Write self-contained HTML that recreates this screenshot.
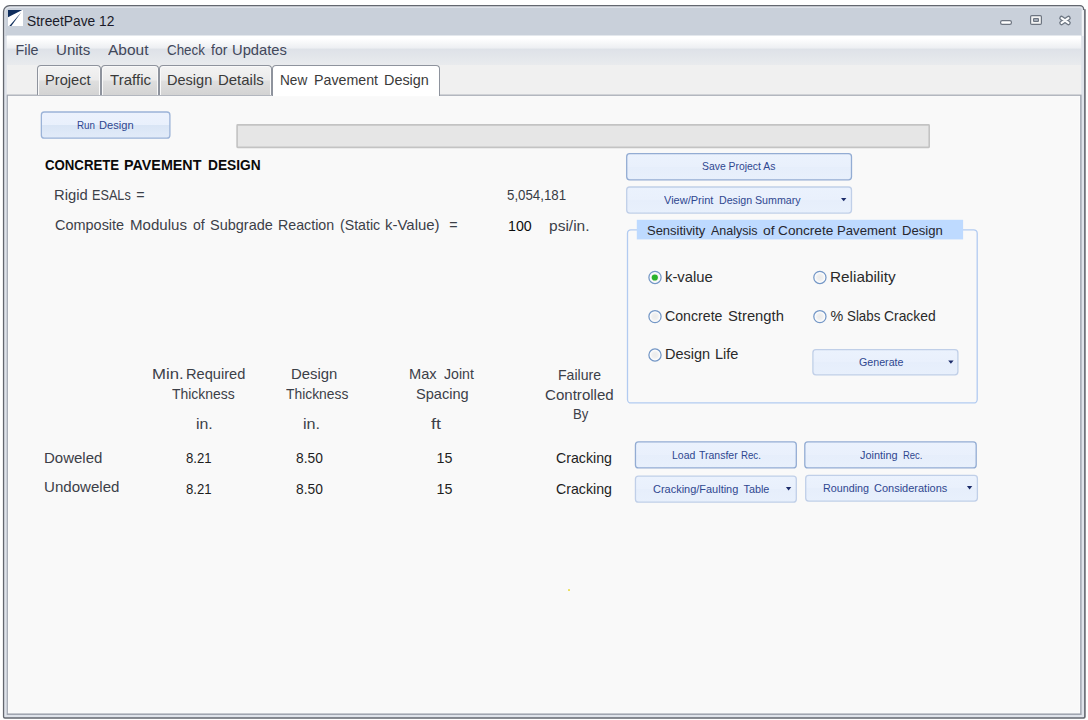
<!DOCTYPE html>
<html lang="en"><head><meta charset="utf-8"><title>StreetPave 12</title>
<style>
html,body{margin:0;padding:0;background:#fff;}
body{width:1088px;height:720px;position:relative;overflow:hidden;font-family:"Liberation Sans",sans-serif;}
.abs,.t,.tab{position:absolute;box-sizing:border-box;}
.t{white-space:pre;line-height:normal;transform-origin:0 0;}
.tab{top:65px;height:30px;border:1px solid #8e939d;border-bottom:none;border-radius:4px 4px 0 0;background:linear-gradient(#f3f3f3 0,#ebebeb 14px,#dfdfdf 15px,#d3d3d3 29px);}
.tab{box-shadow:inset 1px 1px 0 #f9f9f9,inset -1px 0 0 #f9f9f9;}
.tab.sel{background:#fff;height:31px;box-shadow:none;}
</style></head><body>
<svg class="abs" style="left:0;top:0" width="1088" height="720" viewBox="0 0 1088 720">
<defs>
<linearGradient id="mb" x1="0" y1="0" x2="0" y2="1"><stop offset="0" stop-color="#ffffff"/><stop offset="0.1" stop-color="#ffffff"/><stop offset="0.42" stop-color="#edeff2"/><stop offset="0.45" stop-color="#dee2e8"/><stop offset="1" stop-color="#e9ebee"/></linearGradient>
</defs>
<path d="M2.9 11.5A6.5 6.5 0 0 1 9.4 5H1080.1A4.2 4.2 0 0 1 1084.3 9.2H1085.7V716.7A2 2 0 0 1 1083.7 718.7H4.9A2 2 0 0 1 2.9 716.7Z" fill="#63676f"/>
<path d="M4.2 11.7A5.5 5.5 0 0 1 9.7 6.2H1079.9A3.1 3.1 0 0 1 1083 9.3V10H1084.1V716.5A0.8 0.8 0 0 1 1083.3 717.3H5A0.8 0.8 0 0 1 4.2 716.5Z" fill="#dfe3ea"/>
<path d="M5.3 12.5A4.5 4.5 0 0 1 9.8 8H1079.4A2.4 2.4 0 0 1 1081.8 10.4V36H5.3Z" fill="#c9d0da"/>
<rect x="1081.8" y="10.4" width="1.9" height="25.6" fill="#f2f4f7"/>
<rect x="6.8" y="35.5" width="1074.3" height="30" fill="url(#mb)"/>
<rect x="6.8" y="65" width="1074.3" height="30" fill="#f0f0f0"/>
<rect x="6.7" y="94.6" width="1074.9" height="620.4" fill="#a0a5b0"/>
<rect x="7.9" y="95.8" width="1072.2" height="617.6" fill="#fdfdfd"/>
<rect x="8.5" y="96.4" width="1071.2" height="616.4" fill="#f9f9f9"/>
</svg>
<!-- title icon -->
<svg class="abs" style="left:8px;top:10px" width="15" height="16" viewBox="0 0 15 16"><rect width="15" height="16" fill="#fff"/><path d="M0 0H14.2L0 7.2Z" fill="#0f2d5c"/><path d="M13.3 2.2L3.3 16H1.3Z" fill="#0f2d5c"/></svg>
<!-- window buttons -->
<svg class="abs" style="left:998px;top:12px" width="78" height="16" viewBox="0 0 78 16">
<rect x="2.6" y="8.6" width="10.8" height="3.8" rx="1.6" fill="#fff" stroke="#6c7480" stroke-width="1.2"/>
<rect x="32.6" y="3.6" width="10.8" height="8.8" rx="1.2" fill="#f4f4f4" stroke="#6c7480" stroke-width="1.2"/>
<rect x="35.6" y="6.6" width="4.8" height="2.8" rx="0.5" fill="#b9c0cb" stroke="#6c7480" stroke-width="1.2"/>
<path d="M63.6 6.1L70.4 10.9M70.4 6.1L63.6 10.9" fill="none" stroke="#6e7783" stroke-width="4.8" stroke-linecap="round"/><path d="M63.6 6.1L70.4 10.9M70.4 6.1L63.6 10.9" fill="none" stroke="#fbfcfd" stroke-width="2.2" stroke-linecap="round"/>
</svg>
<!-- tabs -->
<div class="tab" style="left:37px;width:64px"></div>
<div class="tab" style="left:101px;width:58px"></div>
<div class="tab" style="left:159px;width:113px"></div>
<div class="tab sel" style="left:272px;width:168px"></div>
<!-- buttons -->
<svg class="abs" style="left:0;top:0" width="1088" height="720" viewBox="0 0 1088 720">
<defs>
<linearGradient id="gb" x1="0" y1="0" x2="0" y2="1"><stop offset="0" stop-color="#ebf2fd"/><stop offset="0.5" stop-color="#e9f0fc"/><stop offset="0.5" stop-color="#e6eefb"/><stop offset="1" stop-color="#e8f0fc"/></linearGradient>
<linearGradient id="gr" x1="0" y1="0" x2="0" y2="1"><stop offset="0" stop-color="#ecf2fd"/><stop offset="0.5" stop-color="#e9f0fc"/><stop offset="0.5" stop-color="#d9e5f5"/><stop offset="1" stop-color="#e2ebf9"/></linearGradient>
<radialGradient id="rg"><stop offset="0" stop-color="#eaeaea"/><stop offset="0.5" stop-color="#f0f0f0"/><stop offset="0.85" stop-color="#fefefe"/></radialGradient></defs>
<rect x="237.1" y="124.9" width="692.1" height="22.5" rx="0.6" fill="#e6e6e6" stroke="#c3c3c3" stroke-width="1.6"/>
<rect x="627.5" y="229.8" width="349.7" height="173.15" rx="3.5" fill="none" stroke="#b2cbf1" stroke-width="1.3"/>
<rect x="636.8" y="219.8" width="326.3" height="19.6" fill="#bedaff"/>
<rect x="41.35" y="112.00" width="128.55" height="26.20" rx="3" fill="url(#gr)" stroke="#9bb3d8" stroke-width="1.3"/>
<rect x="626.70" y="153.70" width="224.80" height="26.10" rx="3" fill="url(#gb)" stroke="#93acd3" stroke-width="1.3"/>
<rect x="626.70" y="187.00" width="224.80" height="26.10" rx="3" fill="url(#gb)" stroke="#c0cfe8" stroke-width="1.3"/>
<rect x="812.90" y="349.70" width="145.00" height="25.10" rx="3" fill="url(#gb)" stroke="#c0cfe8" stroke-width="1.3"/>
<rect x="635.45" y="441.90" width="160.85" height="26.00" rx="3" fill="url(#gb)" stroke="#93acd3" stroke-width="1.3"/>
<rect x="804.80" y="441.90" width="171.40" height="26.00" rx="3" fill="url(#gb)" stroke="#93acd3" stroke-width="1.3"/>
<rect x="635.45" y="476.10" width="160.85" height="26.10" rx="3" fill="url(#gb)" stroke="#c0cfe8" stroke-width="1.3"/>
<rect x="805.70" y="475.40" width="171.70" height="25.70" rx="3" fill="url(#gb)" stroke="#c0cfe8" stroke-width="1.3"/>
<circle cx="655.0" cy="277.4" r="6.1" fill="url(#rg)" stroke="#7497c6" stroke-width="1.25"/>
<circle cx="654.8" cy="277.5" r="3.1" fill="#2ab32a"/>
<circle cx="655.0" cy="316.6" r="6.1" fill="url(#rg)" stroke="#7497c6" stroke-width="1.25"/>
<circle cx="655.0" cy="355.0" r="6.1" fill="url(#rg)" stroke="#7497c6" stroke-width="1.25"/>
<circle cx="819.9" cy="277.4" r="6.1" fill="url(#rg)" stroke="#7497c6" stroke-width="1.25"/>
<circle cx="819.9" cy="316.6" r="6.1" fill="url(#rg)" stroke="#7497c6" stroke-width="1.25"/>
<path d="M841.00 197.90h5.4l-2.7 3.3z" fill="#1c2c6a"/>
<path d="M948.20 360.40h5.4l-2.7 3.3z" fill="#1c2c6a"/>
<path d="M785.90 487.10h5.4l-2.7 3.3z" fill="#1c2c6a"/>
<path d="M966.90 486.10h5.4l-2.7 3.3z" fill="#1c2c6a"/>
</svg>
<div class="abs" style="left:567.8px;top:588.8px;width:2.2px;height:2.2px;background:#ece05c;border-radius:0.6px"></div>
<span class="t" style="left:27.20px;top:13.00px;font-size:14.30px;font-weight:400;color:#1a1a28;transform:scaleX(0.9652)">StreetPave 12</span>
<span class="t" style="left:15.50px;top:42.00px;font-size:14.30px;font-weight:400;color:#41475a;transform:scaleX(1.0000)">File</span>
<span class="t" style="left:55.55px;top:42.00px;font-size:14.30px;font-weight:400;color:#41475a;transform:scaleX(1.0533)">Units</span>
<span class="t" style="left:108.00px;top:42.00px;font-size:14.30px;font-weight:400;color:#41475a;transform:scaleX(1.0832)">About</span>
<span class="t" style="left:166.90px;top:42.00px;font-size:14.30px;font-weight:400;color:#41475a;transform:scaleX(0.9353)">Check</span>
<span class="t" style="left:210.60px;top:42.00px;font-size:14.30px;font-weight:400;color:#41475a;transform:scaleX(0.9809)">for</span>
<span class="t" style="left:232.07px;top:42.00px;font-size:14.30px;font-weight:400;color:#41475a;transform:scaleX(1.0307)">Updates</span>
<span class="t" style="left:44.99px;top:72.00px;font-size:14.60px;font-weight:400;color:#3a3a3a;transform:scaleX(1.0053)">Project</span>
<span class="t" style="left:110.00px;top:72.00px;font-size:14.60px;font-weight:400;color:#3a3a3a;transform:scaleX(1.0333)">Traffic</span>
<span class="t" style="left:167.40px;top:72.00px;font-size:14.60px;font-weight:400;color:#3a3a3a;transform:scaleX(0.9952)">Design</span>
<span class="t" style="left:217.77px;top:72.00px;font-size:14.60px;font-weight:400;color:#3a3a3a;transform:scaleX(1.0251)">Details</span>
<span class="t" style="left:280.32px;top:72.00px;font-size:14.60px;font-weight:400;color:#3a3a3a;transform:scaleX(0.9335)">New</span>
<span class="t" style="left:314.03px;top:72.00px;font-size:14.60px;font-weight:400;color:#3a3a3a;transform:scaleX(0.9744)">Pavement</span>
<span class="t" style="left:383.51px;top:72.00px;font-size:14.60px;font-weight:400;color:#3a3a3a;transform:scaleX(0.9873)">Design</span>
<span class="t" style="left:77.40px;top:119.00px;font-size:10.80px;font-weight:400;color:#2f4790;transform:scaleX(0.9090)">Run</span>
<span class="t" style="left:99.10px;top:119.00px;font-size:10.80px;font-weight:400;color:#2f4790;transform:scaleX(1.0296)">Design</span>
<span class="t" style="left:701.50px;top:160.00px;font-size:10.80px;font-weight:400;color:#2f4790;transform:scaleX(0.9624)">Save Project As</span>
<span class="t" style="left:664.40px;top:194.00px;font-size:10.80px;font-weight:400;color:#2f4790;transform:scaleX(1.0205)">View/Print</span>
<span class="t" style="left:718.60px;top:194.00px;font-size:10.80px;font-weight:400;color:#2f4790;transform:scaleX(0.9850)">Design</span>
<span class="t" style="left:755.20px;top:194.00px;font-size:10.80px;font-weight:400;color:#2f4790;transform:scaleX(0.9873)">Summary</span>
<span class="t" style="left:858.50px;top:356.00px;font-size:10.80px;font-weight:400;color:#2f4790;transform:scaleX(0.9886)">Generate</span>
<span class="t" style="left:671.70px;top:449.00px;font-size:10.80px;font-weight:400;color:#2f4790;transform:scaleX(0.9703)">Load</span>
<span class="t" style="left:698.70px;top:449.00px;font-size:10.80px;font-weight:400;color:#2f4790;transform:scaleX(0.9726)">Transfer</span>
<span class="t" style="left:741.40px;top:449.00px;font-size:10.80px;font-weight:400;color:#2f4790;transform:scaleX(0.8964)">Rec.</span>
<span class="t" style="left:860.30px;top:449.00px;font-size:10.80px;font-weight:400;color:#2f4790;transform:scaleX(1.0078)">Jointing</span>
<span class="t" style="left:902.70px;top:449.00px;font-size:10.80px;font-weight:400;color:#2f4790;transform:scaleX(0.8784)">Rec.</span>
<span class="t" style="left:652.50px;top:483.00px;font-size:10.80px;font-weight:400;color:#2f4790;transform:scaleX(1.0154)">Cracking/Faulting</span>
<span class="t" style="left:743.50px;top:483.00px;font-size:10.80px;font-weight:400;color:#2f4790;transform:scaleX(1.0000)">Table</span>
<span class="t" style="left:823.00px;top:482.00px;font-size:10.80px;font-weight:400;color:#2f4790;transform:scaleX(0.9953)">Rounding</span>
<span class="t" style="left:874.20px;top:482.00px;font-size:10.80px;font-weight:400;color:#2f4790;transform:scaleX(1.0176)">Considerations</span>
<span class="t" style="left:45.10px;top:157.00px;font-size:14.30px;font-weight:700;color:#0a0a0a;transform:scaleX(0.9236)">CONCRETE</span>
<span class="t" style="left:124.10px;top:157.00px;font-size:14.30px;font-weight:700;color:#0a0a0a;transform:scaleX(1.0000)">PAVEMENT</span>
<span class="t" style="left:207.80px;top:157.00px;font-size:14.30px;font-weight:700;color:#0a0a0a;transform:scaleX(0.9617)">DESIGN</span>
<span class="t" style="left:54.07px;top:187.00px;font-size:14.30px;font-weight:400;color:#3c4048;transform:scaleX(1.0339)">Rigid</span>
<span class="t" style="left:92.31px;top:187.00px;font-size:14.30px;font-weight:400;color:#3c4048;transform:scaleX(0.8858)">ESALs</span>
<span class="t" style="left:136.30px;top:187.00px;font-size:14.30px;font-weight:400;color:#3c4048;transform:scaleX(1.0000)">=</span>
<span class="t" style="left:54.80px;top:217.00px;font-size:14.30px;font-weight:400;color:#3c4048;transform:scaleX(1.0119)">Composite</span>
<span class="t" style="left:129.64px;top:217.00px;font-size:14.30px;font-weight:400;color:#3c4048;transform:scaleX(1.0550)">Modulus</span>
<span class="t" style="left:193.10px;top:217.00px;font-size:14.30px;font-weight:400;color:#3c4048;transform:scaleX(0.9873)">of</span>
<span class="t" style="left:210.00px;top:217.00px;font-size:14.30px;font-weight:400;color:#3c4048;transform:scaleX(1.0136)">Subgrade</span>
<span class="t" style="left:278.10px;top:217.00px;font-size:14.30px;font-weight:400;color:#3c4048;transform:scaleX(0.9950)">Reaction</span>
<span class="t" style="left:340.30px;top:217.00px;font-size:14.30px;font-weight:400;color:#3c4048;transform:scaleX(0.9909)">(Static</span>
<span class="t" style="left:385.20px;top:217.00px;font-size:14.30px;font-weight:400;color:#3c4048;transform:scaleX(1.0464)">k-Value)</span>
<span class="t" style="left:449.30px;top:217.00px;font-size:14.30px;font-weight:400;color:#3c4048;transform:scaleX(1.0000)">=</span>
<span class="t" style="left:507.40px;top:187.00px;font-size:14.30px;font-weight:400;color:#383c44;transform:scaleX(0.9285)">5,054,181</span>
<span class="t" style="left:507.91px;top:218.00px;font-size:14.30px;font-weight:400;color:#0c0c0c;transform:scaleX(0.9912)">100</span>
<span class="t" style="left:548.70px;top:218.00px;font-size:14.30px;font-weight:400;color:#3c4048;transform:scaleX(1.0859)">psi/in.</span>
<span class="t" style="left:646.60px;top:223.00px;font-size:13.60px;font-weight:400;color:#26262e;transform:scaleX(0.9528)">Sensitivity</span>
<span class="t" style="left:710.60px;top:223.00px;font-size:13.60px;font-weight:400;color:#26262e;transform:scaleX(0.9189)">Analysis</span>
<span class="t" style="left:763.20px;top:223.00px;font-size:13.60px;font-weight:400;color:#26262e;transform:scaleX(1.0207)">of</span>
<span class="t" style="left:778.10px;top:223.00px;font-size:13.60px;font-weight:400;color:#26262e;transform:scaleX(1.0000)">Concrete</span>
<span class="t" style="left:837.03px;top:223.00px;font-size:13.60px;font-weight:400;color:#26262e;transform:scaleX(0.9664)">Pavement</span>
<span class="t" style="left:901.64px;top:223.00px;font-size:13.60px;font-weight:400;color:#26262e;transform:scaleX(0.9619)">Design</span>
<span class="t" style="left:665.40px;top:269.00px;font-size:14.30px;font-weight:400;color:#2a2a2a;transform:scaleX(1.0382)">k-value</span>
<span class="t" style="left:665.30px;top:308.00px;font-size:14.30px;font-weight:400;color:#2a2a2a;transform:scaleX(0.9904)">Concrete</span>
<span class="t" style="left:728.30px;top:308.00px;font-size:14.30px;font-weight:400;color:#2a2a2a;transform:scaleX(1.0334)">Strength</span>
<span class="t" style="left:664.79px;top:346.00px;font-size:14.30px;font-weight:400;color:#2a2a2a;transform:scaleX(1.0149)">Design</span>
<span class="t" style="left:714.78px;top:346.00px;font-size:14.30px;font-weight:400;color:#2a2a2a;transform:scaleX(1.0181)">Life</span>
<span class="t" style="left:829.53px;top:269.00px;font-size:14.30px;font-weight:400;color:#2a2a2a;transform:scaleX(1.0716)">Reliability</span>
<span class="t" style="left:830.60px;top:308.00px;font-size:14.30px;font-weight:400;color:#2a2a2a;transform:scaleX(1.0000)">%</span>
<span class="t" style="left:847.00px;top:308.00px;font-size:14.30px;font-weight:400;color:#2a2a2a;transform:scaleX(0.9322)">Slabs</span>
<span class="t" style="left:884.40px;top:308.00px;font-size:14.30px;font-weight:400;color:#2a2a2a;transform:scaleX(0.9703)">Cracked</span>
<span class="t" style="left:152.03px;top:366.00px;font-size:14.30px;font-weight:400;color:#3c4048;transform:scaleX(1.1703)">Min.</span>
<span class="t" style="left:186.18px;top:366.00px;font-size:14.30px;font-weight:400;color:#3c4048;transform:scaleX(1.0234)">Required</span>
<span class="t" style="left:172.00px;top:386.00px;font-size:14.30px;font-weight:400;color:#3c4048;transform:scaleX(0.9749)">Thickness</span>
<span class="t" style="left:196.30px;top:416.00px;font-size:14.30px;font-weight:400;color:#3c4048;transform:scaleX(1.1113)">in.</span>
<span class="t" style="left:290.56px;top:366.00px;font-size:14.30px;font-weight:400;color:#3c4048;transform:scaleX(1.0401)">Design</span>
<span class="t" style="left:286.20px;top:386.00px;font-size:14.30px;font-weight:400;color:#3c4048;transform:scaleX(0.9687)">Thickness</span>
<span class="t" style="left:302.50px;top:416.00px;font-size:14.30px;font-weight:400;color:#3c4048;transform:scaleX(1.1325)">in.</span>
<span class="t" style="left:408.68px;top:366.00px;font-size:14.30px;font-weight:400;color:#3c4048;transform:scaleX(1.0247)">Max</span>
<span class="t" style="left:443.70px;top:366.00px;font-size:14.30px;font-weight:400;color:#3c4048;transform:scaleX(0.9892)">Joint</span>
<span class="t" style="left:415.80px;top:386.00px;font-size:14.30px;font-weight:400;color:#3c4048;transform:scaleX(1.0191)">Spacing</span>
<span class="t" style="left:431.00px;top:416.00px;font-size:14.30px;font-weight:400;color:#3c4048;transform:scaleX(1.2544)">ft</span>
<span class="t" style="left:557.52px;top:367.00px;font-size:14.30px;font-weight:400;color:#3c4048;transform:scaleX(0.9848)">Failure</span>
<span class="t" style="left:545.40px;top:387.00px;font-size:14.30px;font-weight:400;color:#3c4048;transform:scaleX(1.0550)">Controlled</span>
<span class="t" style="left:573.48px;top:406.00px;font-size:14.30px;font-weight:400;color:#3c4048;transform:scaleX(0.9192)">By</span>
<span class="t" style="left:44.15px;top:450.00px;font-size:14.30px;font-weight:400;color:#3c4048;transform:scaleX(1.0498)">Doweled</span>
<span class="t" style="left:44.15px;top:479.00px;font-size:14.30px;font-weight:400;color:#3c4048;transform:scaleX(1.0541)">Undoweled</span>
<span class="t" style="left:186.30px;top:450.00px;font-size:14.30px;font-weight:400;color:#1e1e1e;transform:scaleX(0.9220)">8.21</span>
<span class="t" style="left:186.30px;top:481.00px;font-size:14.30px;font-weight:400;color:#1e1e1e;transform:scaleX(0.9220)">8.21</span>
<span class="t" style="left:296.40px;top:450.00px;font-size:14.30px;font-weight:400;color:#1e1e1e;transform:scaleX(0.9650)">8.50</span>
<span class="t" style="left:296.40px;top:481.00px;font-size:14.30px;font-weight:400;color:#1e1e1e;transform:scaleX(0.9650)">8.50</span>
<span class="t" style="left:436.50px;top:450.00px;font-size:14.30px;font-weight:400;color:#1e1e1e;transform:scaleX(1.0000)">15</span>
<span class="t" style="left:436.50px;top:481.00px;font-size:14.30px;font-weight:400;color:#1e1e1e;transform:scaleX(1.0000)">15</span>
<span class="t" style="left:556.00px;top:450.00px;font-size:14.30px;font-weight:400;color:#1e1e1e;transform:scaleX(0.9918)">Cracking</span>
<span class="t" style="left:556.00px;top:481.00px;font-size:14.30px;font-weight:400;color:#1e1e1e;transform:scaleX(0.9918)">Cracking</span>
</body></html>
